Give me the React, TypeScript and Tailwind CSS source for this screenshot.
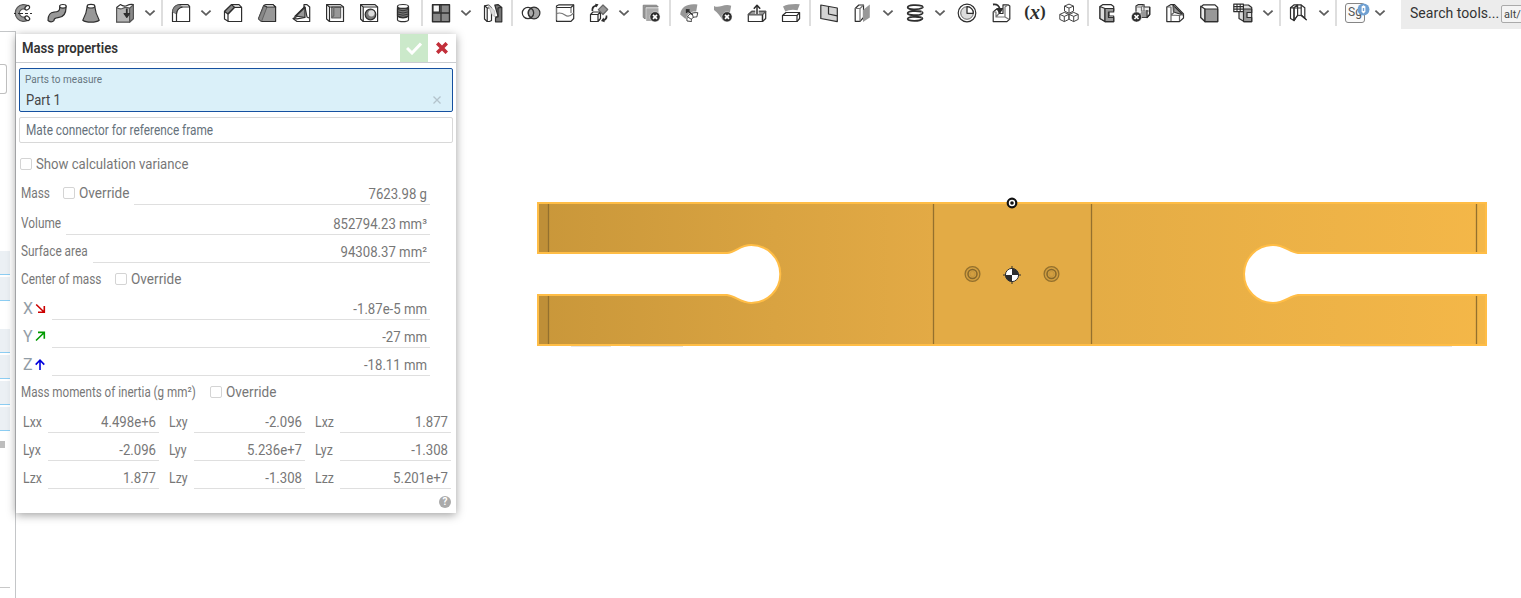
import React from "react";

const D = "#2e2e2e";
const G = "#989898";

function Icon({ children }: { children: React.ReactNode }) {
  return (
    <div className="flex w-[34px] shrink-0 justify-center">
      <svg width="20" height="20" viewBox="0 0 20 20" fill="none" stroke={D} strokeWidth="1.2" strokeLinejoin="round">
        {children}
      </svg>
    </div>
  );
}

function Chevron() {
  return (
    <div className="mr-0.5 flex w-4 shrink-0 justify-center">
      <svg width="12" height="8" viewBox="0 0 12 8" fill="none" stroke="#5c5c5c" strokeWidth="1.8">
        <path d="M1.4 1.6 6 5.8 10.6 1.6" />
      </svg>
    </div>
  );
}

function Separator() {
  return (
    <div className="flex h-[26px] w-1 shrink-0 justify-center self-start">
      <div className="w-0.5 bg-[#dedede]" />
    </div>
  );
}

function ErrorBadge({ cx, cy }: { cx: number; cy: number }) {
  return (
    <g transform={`translate(${cx} ${cy})`}>
      <circle r="5.1" fill={D} stroke="#fff" strokeWidth=".5" />
      <path d="M-2-2 2 2M2-2-2 2" stroke="#fff" strokeWidth="1.7" />
    </g>
  );
}

function Cube({ x, y }: { x: number; y: number }) {
  return (
    <g transform={`translate(${x} ${y})`} strokeWidth="1" stroke="#444">
      <path d="M0-4.6 4.5-2.6V2.4L0 4.6-4.5 2.4V-2.6Z" fill="#fff" />
      <path d="M-4.5-2.6 0-.6 4.5-2.6M0-.6V4.6" />
    </g>
  );
}

function Toolbar() {
  return (
    <header className="flex h-[31px] w-full shrink-0 bg-white">
      <div className="flex h-[26px] items-center pl-1.5">
        <Icon>
          <path d="M15.6 3.2A8.4 8.4 0 1 0 15.6 16.8L12.6 13.4A4 4 0 1 1 12.6 6.6Z" fill={G} stroke="#555" />
          <ellipse cx="14.3" cy="4.7" rx="2.6" ry="1.9" fill="#fff" transform="rotate(-40 14.3 4.7)" />
          <ellipse cx="14.3" cy="15.3" rx="2.6" ry="1.9" fill="#fff" transform="rotate(40 14.3 15.3)" />
          <path d="M1 10.5H3M5 10.5H10M12 10.5H15M17 10.5H19" />
        </Icon>
        <Icon>
          <path d="M12.7 4.2C13 8 11 9 7 9.2 2.5 9.5 1.2 12 1 17.4 2.4 19.3 5.6 19.2 6.9 17.6 7 15.5 8 15 11 14.7 17 14.2 19.3 10 19 3.5Z" fill={G} />
          <ellipse cx="15.9" cy="3.3" rx="3.3" ry="1.8" fill="#fff" />
        </Icon>
        <Icon>
          <path d="M6.2 3.5C5.8 9 4.7 12 1.8 17.2 5 19.7 15 19.7 18.2 17.2 15.3 12 14.2 9 13.8 3.5Z" fill={G} />
          <ellipse cx="10" cy="3.2" rx="3.8" ry="1.8" fill="#fff" />
        </Icon>
        <Icon>
          <path d="M1.6 4.5 5.3 1.6Q9 4 12 2.5T18.4 1.6V15.6L14.6 19H1.6Z" fill="#fff" />
          <path d="M1.6 4.5Q5 6.8 8 5.2T14.6 5.2V19H1.6Z" fill="#b5b5b5" stroke="#555" />
          <path d="M14.6 5.2 18.4 1.6V15.6L14.6 19Z" fill="#8a8a8a" stroke="#555" />
          <path d="M11.8 5.5V12" strokeWidth="1.8" />
          <path d="M9 10.5 11.8 14.4 14.6 10.5Z" fill={D} />
        </Icon>
        <Chevron />
        <Separator />
        <Icon>
          <path d="M1.5 18.5V9Q2 3 8 1.6H17L18.6 3.5V18.5H5.5Z" fill="#fff" />
          <path d="M1.5 9Q2 3 8 1.6L11.5 4Q6 5 5.5 11L1.5 9Z" fill="#888" stroke="#555" strokeWidth=".6" />
          <path d="M5.5 18.5V11Q6 5 11.5 4H18.6" />
        </Icon>
        <Chevron />
        <Icon>
          <path d="M1.5 16V8.5L8.5 1.6H16L18.6 4.3V18.5H5.5Z" fill="#fff" />
          <path d="M1.5 8.5 8.5 1.6 11.5 4.3 5 11Z" fill="#888" />
          <path d="M5 18.5V11L11.5 4.3H18.6" />
        </Icon>
        <Icon>
          <path d="M1.5 15.8 6.5 3 9.5 1.6H16L18.6 4V18.5H4.5Z" fill={G} />
          <path d="M1.5 15.8 7 2.6 10 4 4.5 18.5Z" fill="#888" stroke="#555" strokeWidth=".8" />
          <path d="M7 2.4 9.5 1.6H16L18.6 4H10Z" fill="#fff" />
        </Icon>
        <Icon>
          <path d="M2 15.5 13 10V1.6L16 1.6 18.7 4V18.5H6Z" fill="#fff" />
          <path d="M5 13 14 4.2V14.5Z" fill={G} />
          <path d="M14 4 16 14 18 15M2 15.5 6 15.8 14 14.5M3.5 13.8 14 3.5" />
        </Icon>
        <Icon>
          <path d="M1.6 1.6H15.5L18.5 4V18.5H4.5L1.6 16Z" fill="#fff" />
          <path d="M6.7 4H15.6V14.8H6.7Z" fill={G} stroke="#666" />
          <path d="M1.6 1.6 4.5 4V18.5M4.5 4H18.5" />
          <path d="M6.7 14.8 8.8 12.5V4" stroke="#666" />
        </Icon>
        <Icon>
          <path d="M1.6 1.6H16L18.6 4V18.5H4.2L1.6 16Z" fill="#fff" />
          <path d="M1.6 1.6 4.2 4H18.6M4.2 4V18.5" />
          <circle cx="11.5" cy="11.5" r="5.3" fill="#777" />
          <circle cx="12.4" cy="10.3" r="3.1" fill="#ddd" stroke="none" />
        </Icon>
        <Icon>
          <path d="M4.5 3.5V17C6 19.3 14 19.3 15.5 17V3.5" fill="#fff" />
          <path d="M4.5 5.5V13C7 15.4 13 15.4 15.5 13V5.5Z" fill="#777" />
          <ellipse cx="10" cy="3.4" rx="5.5" ry="1.9" fill="#fff" />
          <path d="M4.5 6.5Q10 9 15.5 6.5M4.5 8.8Q10 11.3 15.5 8.8M4.5 11Q10 13.5 15.5 11M4.5 13.2Q10 15.7 15.5 13.2" strokeWidth=".9" />
        </Icon>
        <Separator />
        <Icon>
          <path d="M1.5 1.8H18.5V18.8H1.5Z" fill="#888" strokeWidth="1.4" />
          <path d="M2 2H8.5V9H2Z" fill="#f5f5f5" />
          <path d="M1.5 10H18.5M10 1.8V18.8" strokeWidth="1.3" />
        </Icon>
        <Chevron />
        <Icon>
          <path d="M1.5 2.8 5.5 2 8.5 5V17.5L6.5 18.5H4.2L1.5 16Z" fill="#fff" />
          <path d="M1.5 2.8 4.2 5V18.5M4.2 5 8 4.8" />
          <path d="M5 1.5 11.8 8 11.8 14 8.5 11Z" fill="#ddd" stroke="#aaa" strokeWidth=".6" />
          <path d="M11.8 2 15 1.6 18.8 4.5V18.8H12.5V15L15 13Z" fill="#777" />
          <path d="M15 4.8 18.8 4.5M15 4.8V14L12 14" />
        </Icon>
        <Separator />
        <Icon>
          <circle cx="7" cy="10" r="5.7" fill="#fff" />
          <circle cx="13" cy="10" r="5.9" fill="#777" fillOpacity=".65" />
          <path d="M10 5.2A5.7 5.7 0 0 1 10 14.8A5.7 5.7 0 0 1 10 5.2" fill="#aaa" />
        </Icon>
        <Icon>
          <path d="M1.5 3 4 1.8H18.7V15.5L16 18.3H1.5Z" fill="#fff" />
          <path d="M1.5 4.5H16L18.7 1.8" />
          <path d="M1.5 10.5Q6 9 10 12T18.7 9.8M16 4.5V10M1.5 4.5V17" stroke="#777" />
        </Icon>
        <Icon>
          <path d="M1.5 11.5 4 9H11.5V15.5L9 18.5H1.5ZM1.5 11.5H9V18.5M9 11.5 11.5 9" fill="#fff" />
          <path d="M14 2 18.7 6.5 14 11.5 9.3 6.7Z" fill={G} stroke="#666" />
          <path d="M3.4 8V6Q4 3 7.5 2.7M17.5 12.5Q18 16.5 14 17.3" strokeWidth="1.7" />
          <path d="M6 .8 9.5 1.2 7.5 4.6ZM14.5 14.4 12 18 15.8 19.2Z" fill={D} stroke="none" />
        </Icon>
        <Chevron />
        <Icon>
          <path d="M2.2 2.2H15.7L17.3 4H4.2V16L2.2 14.5Z" fill="#999" stroke="#777" strokeWidth=".8" />
          <path d="M5.2 5.2H17.5V18H5.2Z" fill="#aaa" stroke="none" />
          <ErrorBadge cx={14} cy={13.8} />
        </Icon>
        <Separator />
        <Icon>
          <path d="M1.2 11.5C2 3.5 9 .2 18.4 1.6L17.2 8.5C12 8 9 10 6.5 16Z" fill={G} stroke="none" />
          <path d="M8 18C7 13 11 9 18.8 9.7L17.8 14C13.5 13.7 12 15.5 12.5 18.5ZM13.2 10.5 14.3 14.5M9 14 12.5 16.5" fill="#fff" strokeWidth=".9" />
          <path d="M13.2 11.5 7.8 7M7.7 10 7.5 6.8 10.7 7" strokeWidth="1.5" />
        </Icon>
        <Icon>
          <path d="M1 3C6 6 11 0 18.2 2.7L17 9 10 17.5C7 13 5 10 1 7Z" fill={G} stroke="none" />
          <ErrorBadge cx={14} cy={13.8} />
        </Icon>
        <Icon>
          <path d="M1.3 11.5 5 8.3H18.7V15.5L15.5 18.5H1.3Z" fill="#fff" />
          <path d="M1.3 11.8 5 8.3H18.7L15.5 11.8Z" fill={G} stroke="#555" />
          <path d="M10 11V3" stroke="#fff" strokeWidth="3.4" />
          <path d="M15.5 11.8V18.5M10 11V3" strokeWidth="1.5" />
          <path d="M6.8 5.7 10 2.3 13.2 5.7" strokeWidth="1.6" />
        </Icon>
        <Icon>
          <path d="M2 3.5Q8 .5 18.8 1.2L16.5 7.2Q9 6 4.3 8.5Z" fill={G} stroke="none" />
          <path d="M1.5 12.5 5 9.5H18.6V15.5L16 18.5H1.5Z" fill="#fff" />
          <path d="M1.5 12.5H16V18.5M16 12.5 18.6 9.5" />
        </Icon>
        <Separator />
        <Icon>
          <path d="M1.8 2 18.3 5V18.6L1.8 15.5Z" fill="#d4d4d4" />
          <path d="M9.5 3.5V11L18.3 12.8" />
        </Icon>
        <Icon>
          <path d="M2.2 5.5 5.8 2H10.5V14.5L7 18.3H2.2Z" fill="#fff" />
          <path d="M2.2 5.5H7V18.3M7 5.5 10.5 2" stroke="#777" />
          <path d="M10 7 16.8 1.5V14.5L10 19Z" fill={G} stroke="none" />
        </Icon>
        <Chevron />
        <Icon>
          <path d="M17 5C14 6.9 2.5 6.9 2.7 4.3 3 1.9 12 1.6 17.5 3M17 10.9C14 12.8 2.5 12.8 2.7 10.2 3 7.8 11 7.6 16.5 8.5M17 15.9C15 18.6 3 18.4 2.7 15.9 3 13.5 11 13.4 16.5 14.3" strokeWidth="1.8" />
          <path d="M17 3.2C18.5 4 18.5 4.6 16.5 5.2M16.5 8.6C18.3 9.4 18.3 10.4 16.5 11M16.5 14.4C18 15 18 15.8 16.5 16.4" strokeWidth="1.4" />
        </Icon>
        <Chevron />
        <Icon>
          <circle cx="10" cy="10" r="8.8" strokeWidth="1.2" />
          <circle cx="10" cy="10" r="6.3" fill="#dcdcdc" strokeWidth=".7" />
          <path d="M10 3.7V10.3H16.3A6.3 6.3 0 0 0 10 3.7Z" fill="#fff" strokeWidth="1.3" />
        </Icon>
        <Icon>
          <path d="M2.2 9 5 6.5H8V10.5H12V1.8H17L18.8 3V16L16 18.6H2.2Z" fill="#fff" />
          <path d="M2.2 9H5V14H14V4L17 1.8M5 14 8 10.5M14 14 18.3 16.5" stroke="#777" />
          <path d="M2 1.5C6 .8 8.5 2.8 8.8 7" strokeWidth="1.8" />
          <path d="M5.8 5.7 8.9 9.8 11.4 5.6Z" fill={D} />
        </Icon>
        <div className="flex w-[34px] shrink-0 justify-center pb-0.5 font-['Liberation_Serif',serif] text-[19px] leading-5 font-bold text-[#2e2e2e]">
          <span className="text-[17px]">(</span>
          <span className="text-[20px] italic">x</span>
          <span className="text-[17px]">)</span>
        </div>
        <Icon>
          <Cube x={10} y={5.7} />
          <Cube x={5.3} y={14} />
          <Cube x={14.7} y={14} />
        </Icon>
        <Separator />
        <Icon>
          <path d="M3 3.5 6 1.6H14L16.7 3.5V7.5H12V13H16.7V18.6H8L3 15.5Z" fill="#fff" />
          <path d="M3 3.5 8 5.5V18.6L3 15.5Z" fill="#ddd" />
          <path d="M8 5.5H16.7V9H11.5V14.5H16.7V18.6H8Z" fill={G} />
        </Icon>
        <Icon>
          <path d="M5 3 7.5 1.6H13V4H18.7V11.5L16 14.5H9.5V11H5Z" fill="#eee" />
          <path d="M5 4H10.5V8H18M10.5 4 13 1.6M13 4V8" stroke="#777" />
          <path d="M10 8.3H15.7V14.2H10Z" fill={G} stroke="none" />
          <path d="M18.7 4V11.5L16 14.5V7" />
          <ErrorBadge cx={5.5} cy={14} />
        </Icon>
        <Icon>
          <path d="M1.8 4 6 1.6H9.5L18.5 11V15L14.5 18.6H1.8Z" fill="#fff" />
          <path d="M8 2 18 12 8.5 9Z" fill={G} />
          <path d="M1.8 4H6V18M6 12 9 9.5V3M6 12 14.5 12.5 18.5 11M14.5 12.5V18" stroke="#666" />
        </Icon>
        <Icon>
          <path d="M1.8 4 4.5 1.8H16L18.7 4.5V18.6H6L1.8 14.5Z" fill="#fff" />
          <path d="M1.8 3.2 6 6V18.6L1.8 14.5Z" fill="#e8e8e8" />
          <path d="M6 6H18.7V18.6H6Z" fill={G} />
        </Icon>
        <Icon>
          <path d="M6 4 9 2H15.5L18.7 4.5V18.6H11L6 15.5Z" fill="#ddd" />
          <path d="M10.5 6H18.7V9.5H14V14.5H18.7V18.6H10.5Z" fill={G} />
          <path d="M.8 1.1H10.4V8.7H.8Z" fill="#fff" />
          <path d="M.8 3.6H10.4M.8 6.1H10.4M4 1.1V8.7M7.2 1.1V8.7" strokeWidth="1.1" />
        </Icon>
        <Chevron />
        <Separator />
        <Icon>
          <path d="M5 17.8 8.6 12.3H12.8L17.6 16.8 12.2 12.6H8.2Z" fill="#aaa" strokeWidth=".7" />
          <path d="M1.5 4.8 5.2 1.8H11.8L15.8 4.8V15.4L12.2 12.2V5H5V17.6L1.5 15.4Z" />
          <path d="M5 5V17.6L8.6 12.4V1.8M1.5 4.8H5L8.6 1.8M12.2 5V1.8M12.2 12.2 17.6 17" />
        </Icon>
        <Chevron />
        <Separator />
        <div className="relative flex w-[34px] shrink-0 justify-center">
          <div className="h-5 w-5 rounded-[3px] border border-[#858585] bg-[#fafafa] pl-[2px] font-['Roboto',sans-serif] text-[12px] leading-[17px] text-[#555]">Sg</div>
          <svg className="absolute top-0 left-[19px]" width="13" height="13" viewBox="0 0 13 13">
            <circle cx="6.5" cy="6.5" r="6" fill="#6fa0d2" />
            <path d="M4.6 3.4 6.5 2.2 8.4 3.4V8.8L6.5 10.5 4.6 8.8Z" fill="#fff" />
            <path d="M5.8 5H7.2V8H5.8Z" fill="#6fa0d2" />
          </svg>
        </div>
        <Chevron />
      </div>
      <div className="ml-[11px] flex h-[29px] flex-1 items-start overflow-hidden bg-[#ececec] pl-[9px] font-['Roboto',sans-serif] whitespace-nowrap">
        <span className="w-[91px] shrink-0 text-[14px] leading-[26px] tracking-[0.05px] text-[#333]">Search tools...</span>
        <span className="mt-[5px] h-[18px] w-8 shrink-0 rounded-[2px] border border-[#aaa] bg-[#f4f4f4] pl-[2px] text-[11px] leading-[17px] text-[#444]">alt/</span>
      </div>
    </header>
  );
}

function SideBlock() {
  return <div className="mb-0.5 h-6 w-[10px] border-b border-[#8ccdf2] bg-[#ebf0f4]" />;
}

function SideStrip() {
  return (
    <aside className="flex w-4 shrink-0 flex-col border-t border-r border-[#c4c6c8] bg-white">
      <div className="mt-8 h-[30px] w-[7px] rounded-r-[3px] border border-l-0 border-[#bfbfbf]" />
      <div className="mt-[157px]">
        <SideBlock />
        <SideBlock />
      </div>
      <div className="mt-[26px]">
        <SideBlock />
        <SideBlock />
        <SideBlock />
        <SideBlock />
      </div>
      <div className="mt-2 h-[7px] w-[5px] bg-[#bdbdbd]" />
      <div className="mt-[139px] h-px w-[10px] bg-[#c8c8c8]" />
    </aside>
  );
}

function Label({ children, scale = "scale-x-[0.845]" }: { children: React.ReactNode; scale?: string }) {
  return <span className={`block origin-left ${scale}`}>{children}</span>;
}

function Check({ label, scale = "scale-x-[0.97]" }: { label: string; scale?: string }) {
  return (
    <span className="flex items-center">
      <span className="mr-1 h-3 w-3 rounded-[2px] border border-[#d4d4d4] bg-white" />
      <Label scale={scale}>{label}</Label>
    </span>
  );
}

function Value({ children }: { children: React.ReactNode }) {
  return (
    <div className="min-w-0 flex-1 border-b border-[#dfdfdf] pr-[3px] pb-[2px] text-right">
      <span className="block origin-right scale-x-[0.94]">{children}</span>
    </div>
  );
}

const axes = [
  { name: "X", value: "-1.87e-5 mm", color: "#cc0000", d: "M1.2 1.5 9 9M9.3 3V9.3H3" },
  { name: "Y", value: "-27 mm", color: "#009a00", d: "M1 9.5 9 1.7M3 1.4H9.3V7.7" },
  { name: "Z", value: "-18.11 mm", color: "#0000dd", d: "M5 11V1.5M.7 5.6 5 1.2 9.3 5.6" },
];

const inertia = [
  [["Lxx", "4.498e+6"], ["Lxy", "-2.096"], ["Lxz", "1.877"]],
  [["Lyx", "-2.096"], ["Lyy", "5.236e+7"], ["Lyz", "-1.308"]],
  [["Lzx", "1.877"], ["Lzy", "-1.308"], ["Lzz", "5.201e+7"]],
];

function MassPanel() {
  return (
    <section className="z-10 mt-[3px] flex h-[479px] w-[440px] shrink-0 flex-col bg-white font-['Roboto',sans-serif] text-[14px] leading-4 whitespace-nowrap text-[#777] shadow-[0_2px_9px_rgba(0,0,0,0.38)]">
      <div className="flex h-[29px] shrink-0 border-b border-[#c9ccd0]">
        <h1 className="flex-1 pl-1.5 leading-[28px] font-semibold text-[#333]">
          <Label scale="scale-x-[0.94]">Mass properties</Label>
        </h1>
        <div className="flex h-7 w-7 items-center justify-center bg-[#cbe9ca]">
          <svg width="16" height="13" viewBox="0 0 16 13" fill="none" stroke="#fff" strokeWidth="3">
            <path d="M1 6 6 11 15 1.5" />
          </svg>
        </div>
        <div className="flex h-7 w-7 items-center justify-center">
          <svg width="12" height="12" viewBox="0 0 12 12" fill="none" stroke="#c22f3a" strokeWidth="3.6">
            <path d="M1.2 1.2 10.8 10.8M10.8 1.2 1.2 10.8" />
          </svg>
        </div>
      </div>

      <div className="mx-[3px] mt-[5px] flex h-11 shrink-0 flex-col rounded-[2px] border border-[#1550a0] bg-[#daf0f9] pl-1.5">
        <span className="mt-[3px] -ml-px text-[10px] leading-4 tracking-[0.05px] text-[#66757f]">Parts to measure</span>
        <div className="mt-1 flex items-center justify-between pr-[11px] text-[#444]">
          <Label scale="scale-x-[0.93]">Part 1</Label>
          <svg width="8" height="8" viewBox="0 0 8 8" stroke="#b3c3cc" strokeWidth="1.3">
            <path d="M.5.5 7.5 7.5M7.5.5.5 7.5" />
          </svg>
        </div>
      </div>
      <div className="mx-[3px] mt-[5px] h-[26px] shrink-0 rounded-[2px] border border-[#d8d8d8] pl-1.5 leading-[24px] text-[#65717b]">
        <Label>Mate connector for reference frame</Label>
      </div>

      <div className="mt-[7px] flex h-7 shrink-0 items-center pl-1">
        <Check label="Show calculation variance" scale="scale-x-[0.94]" />
      </div>
      <div className="flex h-[27px] shrink-0 items-end pr-[26px] pl-[5px]">
        <div className="mb-1 w-[42px]">
          <Label>Mass</Label>
        </div>
        <div className="mb-1 w-[71px]">
          <Check label="Override" />
        </div>
        <Value>7623.98 g</Value>
      </div>
      <div className="flex h-[30px] shrink-0 items-end pr-[26px] pl-[5px]">
        <div className="mb-1 w-[45px]">
          <Label>Volume</Label>
        </div>
        <Value>852794.23 mm³</Value>
      </div>
      <div className="flex h-7 shrink-0 items-end pr-[26px] pl-[5px]">
        <div className="mb-1 w-[72px]">
          <Label>Surface area</Label>
        </div>
        <Value>94308.37 mm²</Value>
      </div>
      <div className="flex h-[29px] shrink-0 items-center pt-[3px] pl-[5px]">
        <div className="w-[94px]">
          <Label>Center of mass</Label>
        </div>
        <Check label="Override" />
      </div>
      {axes.map((a) => (
        <div key={a.name} className="flex h-7 shrink-0 items-end pr-[26px] pl-[7px]">
          <div className="mb-[3px] flex w-[29px] items-center">
            <span className="w-3 text-[16px] text-[#929da6]">{a.name}</span>
            <svg width="11" height="12" viewBox="0 0 11 12" fill="none" stroke={a.color} strokeWidth="1.6">
              <path d={a.d} />
            </svg>
          </div>
          <Value>{a.value}</Value>
        </div>
      ))}
      <div className="flex h-[29px] shrink-0 items-center pt-[3px] pl-[5px]">
        <div className="w-[189px]">
          <Label scale="scale-x-[0.83]">Mass moments of inertia (g mm²)</Label>
        </div>
        <Check label="Override" />
      </div>
      {inertia.map((row, i) => (
        <div key={i} className="flex h-7 shrink-0 items-end gap-[10px] pl-[7px]">
          {row.map(([name, value]) => (
            <div key={name} className="flex w-[136px] items-end">
              <div className="mb-[3px] w-[25px]">
                <Label scale="scale-x-[0.88]">{name}</Label>
              </div>
              <Value>{value}</Value>
            </div>
          ))}
        </div>
      ))}
      <div className="flex justify-end pt-[7px] pr-[5px]">
        <div className="h-3 w-3 rounded-full bg-[#aaa] text-center text-[10px] leading-3 font-bold text-white">?</div>
      </div>
    </section>
  );
}

const outline =
  "M538 203H1486V253H1298C1289 252 1285 245 1273 245A29 29 0 0 0 1273 303C1285 303 1289 296 1298 295H1486V345H538V295H727C736 296 740 303 751.3 303A29 29 0 0 0 751.3 245C740 245 736 252 727 253H538Z";

function Hole({ x }: { x: number }) {
  return (
    <g fill="none" stroke="#93702d" strokeWidth="1.3">
      <circle cx={x} cy="274" r="7.4" fill="#d39f40" />
      <circle cx={x} cy="274" r="4.5" stroke="#86672b" strokeWidth="1.5" />
      <circle cx={x} cy="274" r="2.6" stroke="#c5963e" strokeWidth="1" />
    </g>
  );
}

function Viewport() {
  return (
    <main className="flex-1 pl-[74px] pt-[164px]">
      <svg width="965" height="160" viewBox="530 195 965 160">
        <defs>
          <linearGradient id="steel" gradientUnits="userSpaceOnUse" x1="538" y1="0" x2="1487" y2="0">
            <stop offset="0" stopColor="#c9973a" />
            <stop offset=".25" stopColor="#d9a341" />
            <stop offset=".42" stopColor="#e3aa45" />
            <stop offset=".58" stopColor="#e4ac45" />
            <stop offset="1" stopColor="#f4b748" />
          </linearGradient>
          <clipPath id="part">
            <path d={outline} />
          </clipPath>
        </defs>
        <path d="M571 346.5H611M630 346.5H683M1340 346.5H1452" stroke="#e6e6e6" />
        <g clipPath="url(#part)">
          <rect x="538" y="203" width="949" height="143" fill="url(#steel)" />
          <rect x="538" y="203" width="10" height="143" fill="#bf8f38" />
          <rect x="933" y="203" width="158" height="143" fill="#e3ab45" />
          <path d="M548.5 203V346M933.5 203V346M1091.5 203V346M1476.5 203V346" stroke="#94702e" strokeWidth="1.3" />
        </g>
        <path d={outline} fill="none" stroke="#ffbd46" strokeWidth="2" />
        <Hole x={972.5} />
        <Hole x={1051.5} />
        <circle cx="1012" cy="203" r="4.3" fill="#fff" stroke="#111" strokeWidth="2.2" />
        <circle cx="1012" cy="203" r="1.8" fill="#111" />
        <path d="M1012 266V284M1003 275H1021" stroke="#2e2e2e" />
        <circle cx="1012" cy="275" r="6.6" fill="#fff" stroke="#2e2e2e" />
        <path d="M1012 275V268.4A6.6 6.6 0 0 1 1018.6 275ZM1012 275V281.6A6.6 6.6 0 0 1 1005.4 275Z" fill="#2e2e2e" />
      </svg>
    </main>
  );
}

export default function App() {
  return (
    <div className="flex h-[598px] w-full flex-col overflow-hidden bg-white">
      <Toolbar />
      <div className="flex min-h-0 flex-1">
        <SideStrip />
        <MassPanel />
        <Viewport />
      </div>
    </div>
  );
}
